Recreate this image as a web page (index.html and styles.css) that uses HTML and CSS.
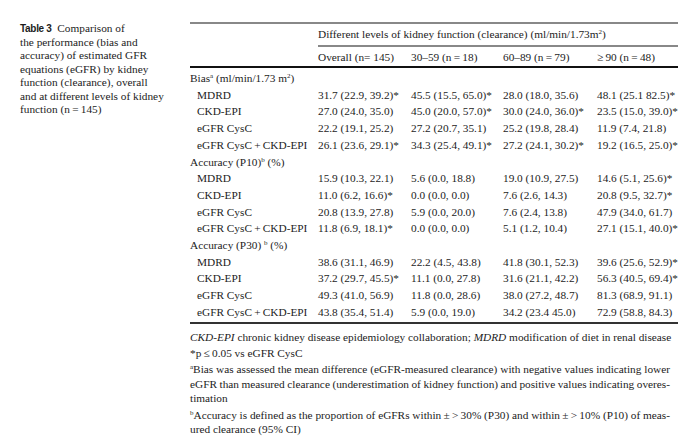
FILE: index.html
```html
<!DOCTYPE html>
<html>
<head>
<meta charset="utf-8">
<link rel="stylesheet" href="styles.css">
</head>
<body>
<div class="page">
  <div class="caption"><span class="tlabel">Table 3</span>&nbsp; Comparison of<br>the performance (bias and<br>accuracy) of estimated GFR<br>equations (eGFR) by kidney<br>function (clearance), overall<br>and at different levels of kidney<br>function (n&#8201;=&#8201;145)</div>
  <div class="main">
    <table class="data">
      <colgroup>
        <col class="c0"><col class="c1"><col class="c2"><col class="c3"><col class="c4">
      </colgroup>
      <thead>
        <tr class="h1">
          <th></th>
          <th colspan="4" class="span">Different levels of kidney function (clearance) (ml/min/1.73m<sup>2</sup>)</th>
        </tr>
        <tr class="h2">
          <th></th>
          <th>Overall (n= 145)</th>
          <th>30–59 (n&#8201;=&#8201;18)</th>
          <th>60–89 (n&#8201;=&#8201;79)</th>
          <th>≥&#8201;90 (n&#8201;=&#8201;48)</th>
        </tr>
      </thead>
      <tbody>
        <tr class="sec first"><td colspan="5">Bias<sup>a</sup> (ml/min/1.73 m<sup>2</sup>)</td></tr>
        <tr><td class="lab">MDRD</td><td>31.7 (22.9, 39.2)*</td><td>45.5 (15.5, 65.0)*</td><td>28.0 (18.0, 35.6)</td><td>48.1 (25.1 82.5)*</td></tr>
        <tr><td class="lab">CKD-EPI</td><td>27.0 (24.0, 35.0)</td><td>45.0 (20.0, 57.0)*</td><td>30.0 (24.0, 36.0)*</td><td>23.5 (15.0, 39.0)*</td></tr>
        <tr><td class="lab">eGFR CysC</td><td>22.2 (19.1, 25.2)</td><td>27.2 (20.7, 35.1)</td><td>25.2 (19.8, 28.4)</td><td>11.9 (7.4, 21.8)</td></tr>
        <tr><td class="lab">eGFR CysC&#8201;+&#8201;CKD-EPI</td><td>26.1 (23.6, 29.1)*</td><td>34.3 (25.4, 49.1)*</td><td>27.2 (24.1, 30.2)*</td><td>19.2 (16.5, 25.0)*</td></tr>
        <tr class="sec"><td colspan="5">Accuracy (P10)<sup>b</sup> (%)</td></tr>
        <tr><td class="lab">MDRD</td><td>15.9 (10.3, 22.1)</td><td>5.6 (0.0, 18.8)</td><td>19.0 (10.9, 27.5)</td><td>14.6 (5.1, 25.6)*</td></tr>
        <tr><td class="lab">CKD-EPI</td><td>11.0 (6.2, 16.6)*</td><td>0.0 (0.0, 0.0)</td><td>7.6 (2.6, 14.3)</td><td>20.8 (9.5, 32.7)*</td></tr>
        <tr><td class="lab">eGFR CysC</td><td>20.8 (13.9, 27.8)</td><td>5.9 (0.0, 20.0)</td><td>7.6 (2.4, 13.8)</td><td>47.9 (34.0, 61.7)</td></tr>
        <tr><td class="lab">eGFR CysC&#8201;+&#8201;CKD-EPI</td><td>11.8 (6.9, 18.1)*</td><td>0.0 (0.0, 0.0)</td><td>5.1 (1.2, 10.4)</td><td>27.1 (15.1, 40.0)*</td></tr>
        <tr class="sec"><td colspan="5">Accuracy (P30) <sup>b</sup> (%)</td></tr>
        <tr><td class="lab">MDRD</td><td>38.6 (31.1, 46.9)</td><td>22.2 (4.5, 43.8)</td><td>41.8 (30.1, 52.3)</td><td>39.6 (25.6, 52.9)*</td></tr>
        <tr><td class="lab">CKD-EPI</td><td>37.2 (29.7, 45.5)*</td><td>11.1 (0.0, 27.8)</td><td>31.6 (21.1, 42.2)</td><td>56.3 (40.5, 69.4)*</td></tr>
        <tr><td class="lab">eGFR CysC</td><td>49.3 (41.0, 56.9)</td><td>11.8 (0.0, 28.6)</td><td>38.0 (27.2, 48.7)</td><td>81.3 (68.9, 91.1)</td></tr>
        <tr class="last"><td class="lab">eGFR CysC&#8201;+&#8201;CKD-EPI</td><td>43.8 (35.4, 51.4)</td><td>5.9 (0.0, 19.0)</td><td>34.2 (23.4 45.0)</td><td>72.9 (58.8, 84.3)</td></tr>
      </tbody>
    </table>
    <div class="notes">
      <p><i>CKD-EPI</i> chronic kidney disease epidemiology collaboration; <i>MDRD</i> modification of diet in renal disease</p>
      <p>*p&#8201;≤&#8201;0.05 vs eGFR CysC</p>
      <p><span class="jl"><sup>a</sup>Bias was assessed the mean difference (eGFR-measured clearance) with negative values indicating lower</span><span class="jl">eGFR than measured clearance (underestimation of kidney function) and positive values indicating overes-</span><span class="ll">timation</span></p>
      <p><span class="jl"><sup>b</sup>Accuracy is defined as the proportion of eGFRs within&#8201;±&#8201;&gt;&#8201;30% (P30) and within&#8201;±&#8201;&gt;&#8201;10% (P10) of meas-</span><span class="ll">ured clearance (95% CI)</span></p>
    </div>
  </div>
</div>
</body>
</html>
```

FILE: styles.css
```css
html, body {
  margin: 0;
  padding: 0;
  background: #ffffff;
}
body {
  font-family: "Liberation Serif", "Times New Roman", serif;
  font-size: 11.3px;
  color: #1c1c1c;
}
.page {
  display: flex;
  align-items: flex-start;
  padding: 20px 0 0 20px;
}
.caption {
  width: 160px;
  margin-top: 2px;
  line-height: 13.5px;
  white-space: nowrap;
  flex: none;
}
.tlabel {
  font-family: "Liberation Sans", Arial, sans-serif;
  font-weight: bold;
  font-size: 10px;
  letter-spacing: -0.3px;
}
.main {
  margin-left: 10px;
  width: 488px;
  flex: none;
}
.data {
  border-collapse: collapse;
  table-layout: fixed;
  width: 488px;
  margin-top: 2px;
  border-top: 2px solid #888;
  border-bottom: 2px solid #333;
}
.c0 { width: 128px; }
.c1 { width: 93px; }
.c2 { width: 92px; }
.c3 { width: 94px; }
.c4 { width: 81px; }
.data th, .data td {
  padding: 0;
  text-align: left;
  font-weight: normal;
  white-space: nowrap;
  vertical-align: middle;
}
.h1 th {
  height: 19px;
  padding-bottom: 2px;
}
.h1 th.span {
  border-bottom: 2px solid #888;
}
.h2 th {
  height: 19px;
  border-bottom: 2px solid #111;
}
.data tbody td {
  height: 16.7px;
  line-height: 16.7px;
}
.data tbody tr.first td {
  padding-top: 2px;
}
.data tbody tr.last td {
  padding-bottom: 1px;
}
.data td.lab {
  padding-left: 7px;
}
sup {
  font-size: 7px;
  line-height: 0;
  vertical-align: 4px;
}
.notes {
  margin-top: 6px;
  width: 482px;
}
.notes p {
  margin: 0 0 1.5px 0;
  line-height: 14.7px;
  white-space: nowrap;
}
.jl {
  display: block;
  width: 480px;
  white-space: normal;
  word-spacing: -1.6px;
  text-align: justify;
  text-align-last: justify;
}
.ll {
  display: block;
}
```
